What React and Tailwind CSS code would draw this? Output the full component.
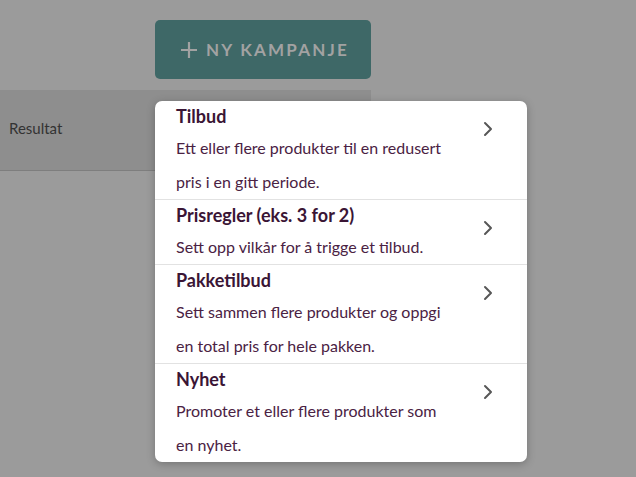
import React from "react"

const options = [
  { title: "Tilbud", lines: ["Ett eller flere produkter til en redusert", "pris i en gitt periode."] },
  { title: "Prisregler (eks. 3 for 2)", lines: ["Sett opp vilkår for å trigge et tilbud."] },
  { title: "Pakketilbud", lines: ["Sett sammen flere produkter og oppgi", "en total pris for hele pakken."] },
  { title: "Nyhet", lines: ["Promoter et eller flere produkter som", "en nyhet."] },
]

function Chevron() {
  return (
    <svg width="10" height="16" viewBox="0 0 10 16" fill="none" className="mt-[20px] shrink-0">
      <path d="M2 2l6 6-6 6" stroke="#575757" strokeWidth="2" strokeLinecap="round" strokeLinejoin="round" />
    </svg>
  )
}

function App() {
  return (
    <div className="relative h-[477px] w-[636px] overflow-hidden bg-[#9b9b9b] font-['Lato',sans-serif]">
      {/* header button */}
      <div className="pt-[20px] pl-[155px]">
        <div className="flex h-[59px] w-[216px] items-center gap-[8px] rounded-[5px] bg-[#3e6867] pl-[25px]">
          <svg width="18" height="18" viewBox="0 0 18 18">
            <path d="M9 1v16M1 9h16" stroke="#a2a2a2" strokeWidth="2.2" />
          </svg>
          <span className="text-[17px] font-bold tracking-[0.13em] text-[#a2a2a2]">NY KAMPANJE</span>
        </div>
      </div>

      {/* table row behind */}
      <div className="mt-[11px] flex h-[81px] w-[371px] items-center border-b border-[#7e7e7e] bg-[#8e8e8e] pl-[9px] pb-[4px]">
        <span className="text-[15px] text-[#333]">Resultat</span>
      </div>

      {/* dropdown menu */}
      <div className="absolute left-[155px] top-[101px] w-[372px] rounded-[7px] bg-white shadow-[0_2px_8px_rgba(0,0,0,0.25)]">
        {options.map((o, i) => (
          <div
            key={o.title}
            className={"flex justify-between pl-[21px] pr-[34px] " + (i < options.length - 1 ? "border-b border-[#e2e2e2]" : "")}
          >
            <div>
              <div className="flex h-[30px] items-center text-[18px] font-bold text-[#3a1535]">{o.title}</div>
              {o.lines.map((l) => (
                <div key={l} className="flex h-[34px] items-center text-[16px] text-[#4a2243]">{l}</div>
              ))}
            </div>
            <Chevron />
          </div>
        ))}
      </div>
    </div>
  )
}

export default App
